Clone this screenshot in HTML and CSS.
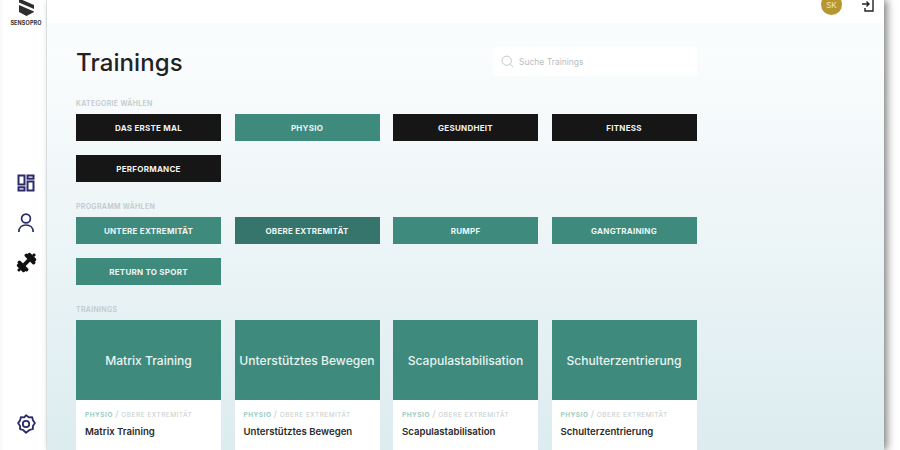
FILE: index.html
```html
<!DOCTYPE html>
<html lang="de">
<head>
<meta charset="utf-8">
<title>Trainings</title>
<link rel="stylesheet" href="styles.css">
</head>
<body>
<div class="window">
  <aside class="sidebar">
    <div class="logo">
      <svg class="logo-mark" viewBox="0 0 15 21"><path d="M0 0h15v3.500L9 1zM0 3.500l15 6.500v4L0 7.500zM0 10l15 6.500v.5l-7.500 4L0 17z" fill="#2e2e2e"/></svg>
      <span class="logo-text">SENSOPRO</span>
    </div>
    <nav class="nav">
      <svg class="nav-icon" viewBox="0 0 20 20" fill="none" stroke="#2b2a6b" stroke-width="2"><rect x="2.500" y="2.500" width="6" height="9"/><rect x="2.500" y="14.300" width="6" height="3.200"/><rect x="11.500" y="2.500" width="6" height="3.200"/><rect x="11.500" y="8.500" width="6" height="9"/></svg>
      <svg class="nav-icon" viewBox="0 0 20 20" fill="none" stroke="#2b2a6b" stroke-width="1.700"><circle cx="10" cy="5.500" r="4.400"/><path d="M2.800 19c0-4.500 3-7 7.200-7s7.200 2.500 7.200 7"/></svg>
      <svg class="nav-icon" viewBox="0 0 20 20" fill="#111"><g transform="rotate(-45 10 10)"><rect x="-1.500" y="8.600" width="3" height="2.800" rx="1"/><rect x="1" y="5" width="3.500" height="10" rx="1.500"/><rect x="3.500" y="3.500" width="3.500" height="13" rx="1.500"/><rect x="6.500" y="8.200" width="7" height="3.600"/><rect x="13" y="3.500" width="3.500" height="13" rx="1.500"/><rect x="15.500" y="5" width="3.500" height="10" rx="1.500"/><rect x="18.500" y="8.600" width="3" height="2.800" rx="1"/></g></svg>
    </nav>
    <svg class="settings" viewBox="0 0 20 20" fill="none" stroke="#2b2a6b" stroke-width="1.800" stroke-linejoin="round"><path d="M10 1.200l2.800 2.100 3.400-.2.700 3.200 2 2.700-2 2.900.1 3.100-3.200.8L10 18.800 7.200 16l-3.200-.9.100-3.100-2-2.900 2-2.700.7-3.200 3.400.2z"/><circle cx="10" cy="10" r="3.200"/></svg>
  </aside>
  <main class="main">
    <header class="topbar">
      <span class="avatar">SK</span>
      <svg class="logout" viewBox="0 0 12 16" fill="none" stroke="#222" stroke-width="1.400"><path d="M3 4V1h8v14H3v-3"/><path d="M0 8h7M4.500 5.500 7 8l-2.500 2.500"/></svg>
    </header>
    <div class="content">
      <div class="head">
        <h1 class="title">Trainings</h1>
        <label class="search">
          <svg class="search-icon" viewBox="0 0 14 14" fill="none" stroke="#bdc4c6" stroke-width="1"><circle cx="6.200" cy="6.200" r="5"/><path d="m10 10 3 3"/></svg>
          <span class="search-text">Suche Trainings</span>
        </label>
      </div>
      <h2 class="label label-first">KATEGORIE WÄHLEN</h2>
      <div class="grid">
        <a class="btn btn-dark">DAS ERSTE MAL</a>
        <a class="btn">PHYSIO</a>
        <a class="btn btn-dark">GESUNDHEIT</a>
        <a class="btn btn-dark">FITNESS</a>
        <a class="btn btn-dark">PERFORMANCE</a>
      </div>
      <h2 class="label">PROGRAMM WÄHLEN</h2>
      <div class="grid">
        <a class="btn">UNTERE EXTREMITÄT</a>
        <a class="btn btn-active">OBERE EXTREMITÄT</a>
        <a class="btn">RUMPF</a>
        <a class="btn">GANGTRAINING</a>
        <a class="btn">RETURN TO SPORT</a>
      </div>
      <h2 class="label">TRAININGS</h2>
      <div class="grid">
        <article class="card"><div class="card-img">Matrix Training</div><div class="card-body"><p class="crumb"><b>PHYSIO</b> <i>/</i> OBERE EXTREMITÄT</p><h3 class="card-title">Matrix Training</h3></div></article>
        <article class="card"><div class="card-img">Unterstütztes Bewegen</div><div class="card-body"><p class="crumb"><b>PHYSIO</b> <i>/</i> OBERE EXTREMITÄT</p><h3 class="card-title">Unterstütztes Bewegen</h3></div></article>
        <article class="card"><div class="card-img">Scapulastabilisation</div><div class="card-body"><p class="crumb"><b>PHYSIO</b> <i>/</i> OBERE EXTREMITÄT</p><h3 class="card-title">Scapulastabilisation</h3></div></article>
        <article class="card"><div class="card-img">Schulterzentrierung</div><div class="card-body"><p class="crumb"><b>PHYSIO</b> <i>/</i> OBERE EXTREMITÄT</p><h3 class="card-title">Schulterzentrierung</h3></div></article>
      </div>
    </div>
  </main>
</div>
</body>
</html>
```
FILE: styles.css
```css
* { box-sizing: border-box; }
html, body { margin: 0; height: 100%; background: #fff; overflow: hidden; }
body { font-family: Inter, "Noto Sans", sans-serif; color: #222; }
.window { display: flex; width: 884px; height: 450px; box-shadow: 3px 0 8px rgba(0,0,0,.5); background: #fff; }
.sidebar { width: 47px; flex: none; display: flex; flex-direction: column; align-items: center; padding-left: 6px; box-shadow: inset 5px 0 4px -4px rgba(0,0,0,.04); border-right: 1px solid #e6ecee; }
.logo { display: flex; flex-direction: column; align-items: center; margin-top: -5px; }
.logo-mark { width: 15px; height: 21px; }
.logo-text { font-size: 5.500px; font-weight: 700; letter-spacing: .1px; margin-top: 4px; color: #333; line-height: 6px; }
.nav { display: flex; flex-direction: column; align-items: center; gap: 19.500px; margin-top: 147px; }
.nav-icon { width: 20px; height: 20px; display: block; }
.nav-icon:last-child { width: 21px; height: 21px; }
.settings { width: 20px; height: 20px; margin-top: auto; margin-bottom: 16px; }
.main { flex: 1; min-width: 0; display: flex; flex-direction: column; box-shadow: -3px 0 5px -2px rgba(0,0,0,.1); }
.topbar { height: 23px; flex: none; background: #fff; display: flex; align-items: flex-start; justify-content: flex-end; padding-right: 10px; }
.avatar { width: 21px; height: 21px; border-radius: 50%; background: #b7952f; color: #f0e6c6; font-size: 8px; display: flex; align-items: center; justify-content: center; margin-top: -6px; margin-right: 20px; }
.logout { width: 12px; height: 16px; margin-top: -4px; }
.content { flex: 1; min-height: 0; padding: 0 0 0 29px; background: linear-gradient(#f9fcfd, #fafcfd 8%, #dcecef); overflow: hidden; }
.head { display: flex; align-items: center; justify-content: space-between; width: 621px; height: 52px; margin-top: 13px; }
.title { margin: 0; font-size: 24px; font-weight: 500; letter-spacing: .1px; color: #222; }
.search { width: 204px; height: 29px; background: #fff; display: flex; align-items: center; padding: 1px 0 0 8px; gap: 5px; margin-bottom: 2px; }
.search-icon { width: 13px; height: 13px; }
.search-text { font-size: 8.500px; color: #b8bec0; }
.label { margin: 0; height: 11px; font-size: 7px; line-height: 11px; font-weight: 600; letter-spacing: .3px; color: #c3c9cb; margin-top: 19px; margin-bottom: 5px; }
.label-first { margin-top: 10px; }
.grid { display: grid; grid-template-columns: repeat(4, 145px); column-gap: 13.500px; row-gap: 14px; width: 621px; }
.btn { height: 27px; display: flex; align-items: center; justify-content: center; background: #3e8b7e; color: #eef5f3; font-size: 8px; font-weight: 700; letter-spacing: .25px; }
.btn-dark { background: #161616; color: #f2f2f2; }
.btn-active { background: #36756b; }
.card { display: flex; flex-direction: column; background: #fff; }
.card-img { height: 80px; background: #3e8b7e; color: #e8f3f0; display: flex; align-items: center; justify-content: center; font-size: 12.100px; font-weight: 500; white-space: nowrap; }
.card-body { padding: 9px 9px; min-height: 70px; }
.crumb { margin: 0; font-size: 6.500px; line-height: 9px; letter-spacing: .5px; color: #c6cccd; }
.crumb b { color: #9ccbbf; font-weight: 700; }
.crumb i { font-style: normal; font-size: 9px; }
.card-title { margin: 5px 0 0; font-size: 9.600px; font-weight: 600; line-height: 14px; color: #2a2a2a; }
```
